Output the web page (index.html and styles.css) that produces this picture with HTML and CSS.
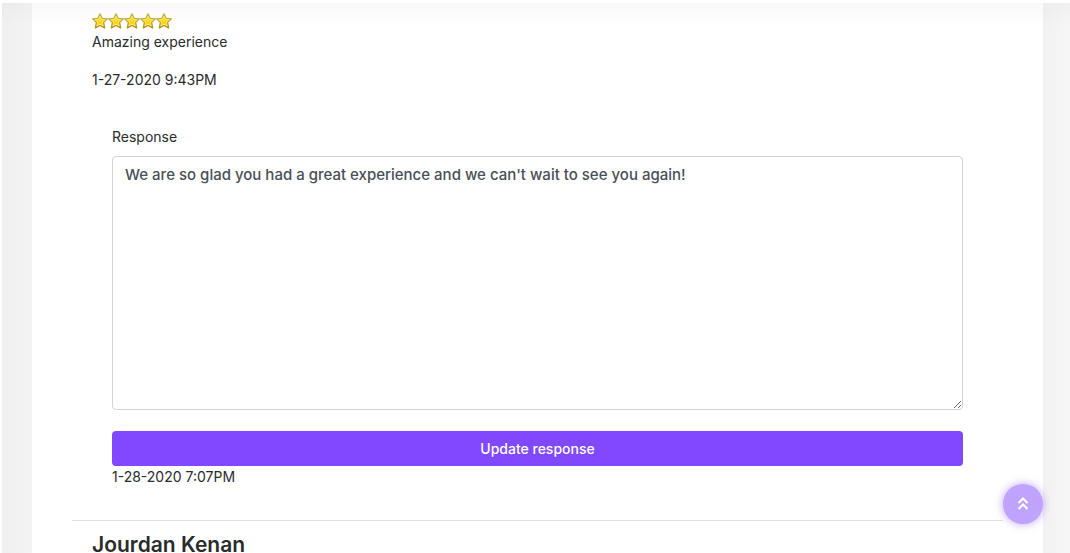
FILE: index.html
```html
<!DOCTYPE html>
<html lang="en">
<head>
<meta charset="utf-8">
<meta name="viewport" content="width=device-width, initial-scale=1">
<title>Reviews</title>
<link rel="stylesheet" href="styles.css">
</head>
<body>
<svg class="defs" aria-hidden="true">
  <defs>
    <linearGradient id="gold" x1="0" y1="0" x2="0" y2="1">
      <stop offset="0" stop-color="#ffe633"/>
      <stop offset="1" stop-color="#fccb05"/>
    </linearGradient>
    <linearGradient id="rim" x1="0" y1="0" x2="0" y2="1">
      <stop offset="0" stop-color="#cdb740"/>
      <stop offset="1" stop-color="#ae9015"/>
    </linearGradient>
    <symbol id="star" viewBox="0 0 16 16">
      <path d="M8 .9 10.200 5.300 15.300 5.900 11.600 9.400 12.600 14.900 8 12.500 3.400 14.900 4.400 9.400.7 5.900 5.800 5.300Z" fill="#ffef90" stroke="url(#rim)" stroke-width="1.300" stroke-linejoin="round"/>
      <path d="M8 3.700 9.500 6.700 12.700 7 10.300 9.200 10.900 12.200 8 10.700 5.100 12.200 5.700 9.200 3.300 7 6.500 6.700Z" fill="url(#gold)"/>
    </symbol>
  </defs>
</svg>
<div class="page">
  <main class="panel">
    <article class="review">
      <div class="stars" role="img" aria-label="5 out of 5 stars">
        <svg class="star"><use href="#star"/></svg>
        <svg class="star"><use href="#star"/></svg>
        <svg class="star"><use href="#star"/></svg>
        <svg class="star"><use href="#star"/></svg>
        <svg class="star"><use href="#star"/></svg>
      </div>
      <p class="text">Amazing experience</p>
      <p class="text posted">1-27-2020 9:43PM</p>
      <form class="response">
        <label class="label" for="response">Response</label>
        <textarea class="field" id="response">We are so glad you had a great experience and we can't wait to see you again!</textarea>
        <button class="submit" type="button">Update response</button>
        <p class="text">1-28-2020 7:07PM</p>
      </form>
    </article>
    <article class="review next">
      <h2 class="name">Jourdan Kenan</h2>
    </article>
  </main>
</div>
<button class="to-top" type="button" aria-label="Back to top">
  <svg class="chevrons" viewBox="0 0 12 14"><path d="M1.500 6 6 1.500l4.500 4.500M1.500 12 6 7.500 10.500 12" fill="none" stroke="#fff" stroke-width="2"/></svg>
</button>
</body>
</html>
```
FILE: styles.css
```css
* { box-sizing: border-box; }

html { background: #fff; }

body {
  margin: 0;
  height: 100vh;
  overflow: hidden;
  padding: 3px 0 0 2px;
  font-family: Inter, "Noto Sans", sans-serif;
  color: #292b2c;
}

.defs { position: absolute; width: 0; height: 0; }

.page {
  position: relative;
  height: 100%;
  padding: 0 27px 0 30px;
  background: linear-gradient(90deg, #f0f0f0, #f4f4f4 30px, #f2f2f2 calc(100% - 27px), #f6f6f6);
}

.page::before {
  content: "";
  position: absolute;
  inset: 0 0 auto;
  height: 24px;
  background: linear-gradient(rgba(90, 100, 110, .04), transparent);
  pointer-events: none;
  z-index: 1;
}

.panel {
  height: 100%;
  padding: 0 40px;
  background: #fff;
}

.review { padding: 10px 20px 32px; }

.stars { display: flex; height: 18px; }

.star { width: 16px; height: 16px; }

.text {
  margin: 0;
  font-size: 14px;
  line-height: 22px;
}

.posted { margin-top: 16px; }

.response {
  display: flex;
  flex-direction: column;
  padding: 35px 20px 0;
}

.label {
  font-size: 14px;
  line-height: 22px;
}

.field {
  display: block;
  width: 100%;
  height: 254px;
  margin: 8px 0 21px;
  padding: 6px 12px;
  border: 1px solid #ced4da;
  border-radius: 4px;
  background: #fff;
  color: #495057;
  font: 500 15px/24px Inter, sans-serif;
  outline: 0;
  resize: vertical;
}

.submit {
  height: 35px;
  border: 0;
  border-radius: 4px;
  background: #8048ff;
  color: #fff;
  font: 500 14px/20px Inter, sans-serif;
}

.next {
  padding-top: 12px;
  padding-bottom: 0;
  border-top: 1px solid #dedfe0;
}

.name {
  margin: 0;
  font-size: 21px;
  font-weight: 600;
  line-height: 24px;
}

.to-top {
  position: fixed;
  right: 27px;
  bottom: 29px;
  display: grid;
  place-items: center;
  width: 40px;
  height: 40px;
  padding: 0;
  border: 0;
  border-radius: 50%;
  background: #bfa3ff;
  box-shadow: 0 0 8px rgba(128, 72, 255, .5);
  z-index: 2;
}

.chevrons { width: 12px; height: 14px; }
```
